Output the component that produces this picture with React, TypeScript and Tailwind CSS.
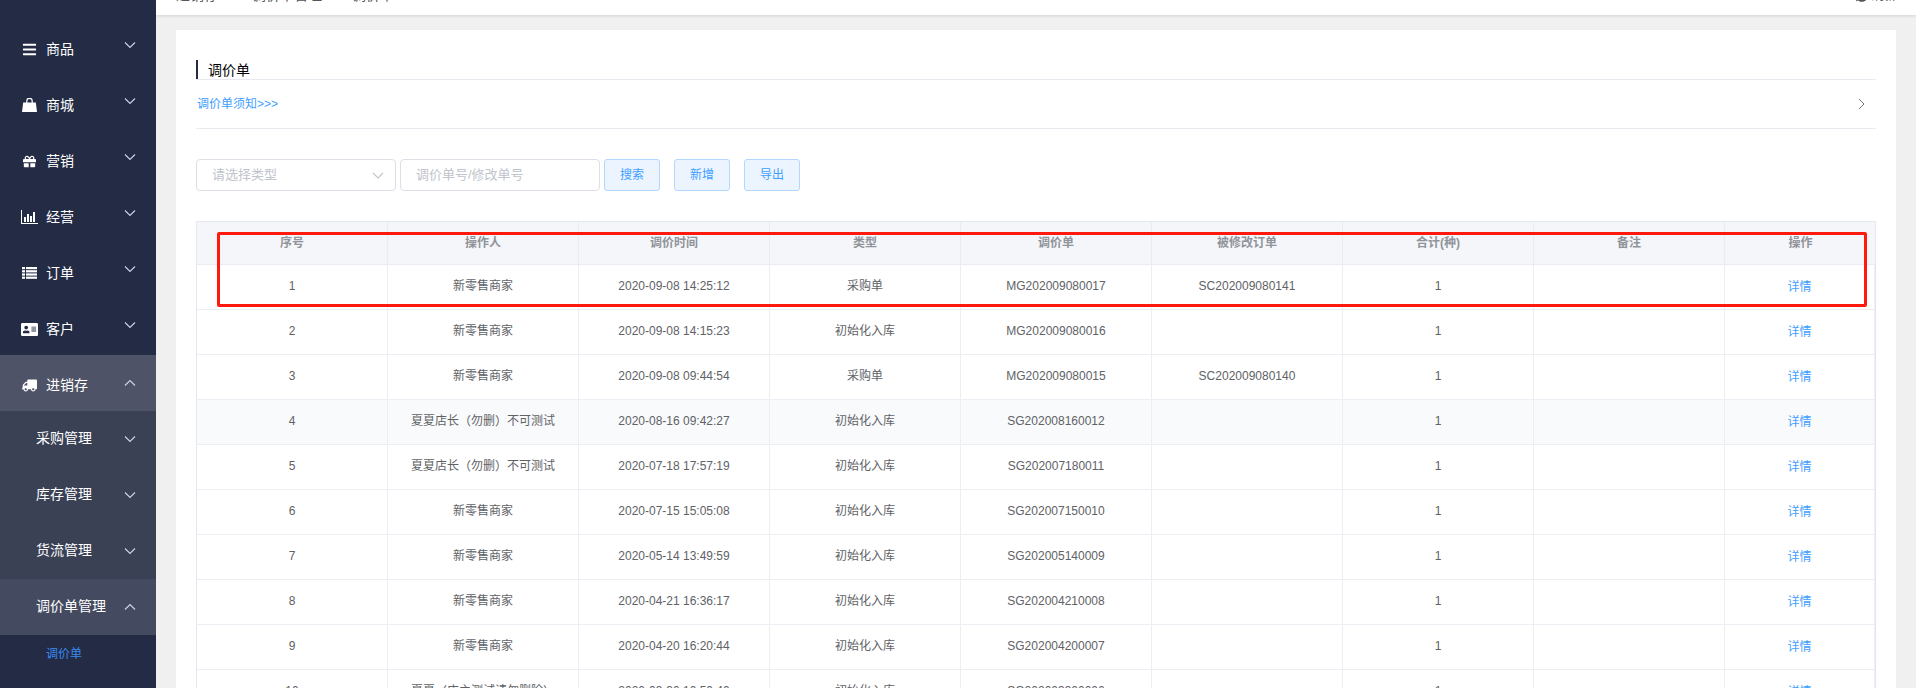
import React from "react";
import { FaBars, FaGift, FaAddressCard, FaTruck, FaSyncAlt } from "react-icons/fa";

const font = "font-['Liberation_Sans','Noto_Sans_CJK_SC',sans-serif]";

function Chevron({ up, className = "" }: { up?: boolean; className?: string }) {
  return (
    <svg width="12" height="8" viewBox="0 0 12 8" fill="none" className={className}>
      <polyline points={up ? "1,6.5 6,1.5 11,6.5" : "1,1.5 6,6.5 11,1.5"} stroke="#c9d3e0" strokeWidth="1.2" />
    </svg>
  );
}

function BagIcon() {
  return (
    <svg width="15" height="14" viewBox="0 0 15 14" fill="white">
      <path d="M1.2 4.5h12.6L15 14H0z" />
      <path d="M4.8 6V3a2.7 2.7 0 0 1 5.4 0v3" fill="none" stroke="white" strokeWidth="1.2" />
    </svg>
  );
}

function ChartIcon() {
  return (
    <svg width="17" height="14" viewBox="0 0 17 14" fill="white">
      <rect x="0" y="0" width="1" height="14" />
      <rect x="0" y="13" width="17" height="1" />
      <rect x="3" y="7" width="2" height="5" />
      <rect x="6" y="4" width="2" height="8" />
      <rect x="9" y="6" width="2" height="6" />
      <rect x="12" y="2" width="2" height="10" />
    </svg>
  );
}

function ListIcon() {
  return (
    <svg width="15" height="12" viewBox="0 0 15 12" fill="white">
      {[0, 3.2, 6.4, 9.6].map((y) => (
        <g key={y}>
          <rect x="0" y={y} width="3" height="2.2" />
          <rect x="4" y={y} width="11" height="2.2" />
        </g>
      ))}
    </svg>
  );
}

function IconBox({ children }: { children: React.ReactNode }) {
  return (
    <div className="w-[46px] pl-[21px] flex justify-start pt-1 shrink-0">
      <div className="w-[17px] flex justify-center text-white">{children}</div>
    </div>
  );
}

function MenuRow({ icon, label }: { icon: React.ReactNode; label: string }) {
  return (
    <div className="h-14 flex items-center">
      <IconBox>{icon}</IconBox>
      <span className="text-sm text-white pt-1 flex-1">{label}</span>
      <Chevron className="mr-[20px] mb-1" />
    </div>
  );
}

function SubRow({ label, active }: { label: string; active?: boolean }) {
  return (
    <div className={`h-14 flex items-center pl-9 pr-5 ${active ? "bg-[#444b60]" : ""}`}>
      <span className="text-sm text-white flex-1 pb-0.5">{label}</span>
      <Chevron up={active} />
    </div>
  );
}

const Paren = ({ c }: { c: string }) => <span className="font-['Noto_Sans_CJK_TC']">{c}</span>;

const headers = ["序号", "操作人", "调价时间", "类型", "调价单", "被修改订单", "合计(种)", "备注", "操作"];
const A = "新零售商家";
const B = (
  <>
    夏夏店长<Paren c="（" />勿删<Paren c="）" />不可测试
  </>
);
const C = (
  <>
    夏夏<Paren c="（" />店主测试请勿删除<Paren c="）" />
  </>
);
const rows: React.ReactNode[][] = [
  ["1", A, "2020-09-08 14:25:12", "采购单", "MG202009080017", "SC202009080141"],
  ["2", A, "2020-09-08 14:15:23", "初始化入库", "MG202009080016", ""],
  ["3", A, "2020-09-08 09:44:54", "采购单", "MG202009080015", "SC202009080140"],
  ["4", B, "2020-08-16 09:42:27", "初始化入库", "SG202008160012", ""],
  ["5", B, "2020-07-18 17:57:19", "初始化入库", "SG202007180011", ""],
  ["6", A, "2020-07-15 15:05:08", "初始化入库", "SG202007150010", ""],
  ["7", A, "2020-05-14 13:49:59", "初始化入库", "SG202005140009", ""],
  ["8", A, "2020-04-21 16:36:17", "初始化入库", "SG202004210008", ""],
  ["9", A, "2020-04-20 16:20:44", "初始化入库", "SG202004200007", ""],
  ["10", C, "2020-03-30 10:50:40", "初始化入库", "SG202003300006", ""],
];
const gridCols = "grid grid-cols-[repeat(8,191px)_151px]";

export default function App() {
  return (
    <div className={`h-[688px] w-[1916px] overflow-hidden flex ${font}`}>
      <aside className="w-[156px] shrink-0 bg-[#232b45] pt-[19px] z-20">
        <MenuRow icon={<FaBars size={15} />} label="商品" />
        <MenuRow icon={<BagIcon />} label="商城" />
        <MenuRow icon={<FaGift size={13} />} label="营销" />
        <MenuRow icon={<ChartIcon />} label="经营" />
        <MenuRow icon={<ListIcon />} label="订单" />
        <MenuRow icon={<FaAddressCard size={17} />} label="客户" />
        <div className="h-14 flex items-center bg-[#4e5367]">
          <IconBox>
            <FaTruck size={15} className="-scale-x-100" />
          </IconBox>
          <span className="text-sm text-white pt-1 flex-1">进销存</span>
          <Chevron up className="mr-5" />
        </div>
        <div className="bg-[#3a4155]">
          <SubRow label="采购管理" />
          <SubRow label="库存管理" />
          <SubRow label="货流管理" />
          <SubRow label="调价单管理" active />
        </div>
        <div className="pl-[46px] pt-2 text-xs leading-[22px] text-[#3a8af0]">调价单</div>
      </aside>

      <main className="flex-1 bg-[#f0f0f0] min-w-0">
        <header className="h-[15px] bg-white shadow-[0_1px_3px_rgba(0,0,0,0.12)] overflow-hidden flex items-start px-5 text-sm leading-none text-[#555] relative z-10">
          <div className="flex items-start w-full -mt-3">
            <span>进销存</span>
            <span className="ml-[34px]">调价单管理</span>
            <span className="ml-[30px]">调价单</span>
            <span className="ml-auto flex items-center gap-1 text-xs"><FaSyncAlt size={12} />刷新</span>
          </div>
        </header>

        <section className="relative ml-5 mt-[15px] w-[1720px] h-[700px] bg-white px-5 pt-[30px]">
          <div className="h-[20px] border-b border-[#e8eaf0] flex">
            <div className="w-0.5 h-[19px] bg-[#232b45]" />
            <span className="ml-2.5 text-[14px] leading-[21px] text-black">调价单</span>
          </div>
          <div className="h-[49px] border-b border-[#e8eaf0] flex items-center justify-between pl-px pr-[11px]">
            <span className="text-xs text-[#409eff]">调价单须知&gt;&gt;&gt;</span>
            <svg width="7" height="12" viewBox="0 0 7 12" fill="none">
              <polyline points="1,1 6,6 1,11" stroke="#778" strokeWidth="1" />
            </svg>
          </div>

          <div className="mt-[30px] flex items-center h-8 text-[13px]">
            <div className="w-[200px] h-8 border border-[#dcdfe6] rounded flex items-center justify-between pl-[15px] pr-[11px] text-[#c0c4cc]">
              <span>请选择类型</span>
              <svg width="12" height="7" viewBox="0 0 12 7" fill="none">
                <polyline points="1,1 6,6 11,1" stroke="#c0c4cc" strokeWidth="1.1" />
              </svg>
            </div>
            <div className="ml-1 w-[200px] h-8 border border-[#dcdfe6] rounded flex items-center pl-[15px] text-[#c0c4cc]">调价单号/修改单号</div>
            {["搜索", "新增", "导出"].map((t, i) => (
              <button key={t} className={`w-14 h-8 rounded-[3px] border border-[#b3d8ff] bg-[#ecf5ff] text-xs text-[#409eff] ${i === 0 ? "ml-1" : "ml-3.5"}`}>{t}</button>
            ))}
          </div>

          <div className="mt-[30px] w-[1680px] border-t border-l border-r border-[#e4e7ed] text-xs">
            <div className={`${gridCols} h-[43px] bg-[#f5f6fa] border-b border-[#e9ecf3] font-bold text-[#909399]`}>
              {headers.map((h, i) => (
                <div key={h} className={`flex justify-center pt-[13px] ${i < 8 ? "border-r border-[#e9ecf3]" : ""}`}>{h}</div>
              ))}
            </div>
            {rows.map((r, idx) => (
              <div key={idx} className={`${gridCols} h-[45px] border-b border-[#eceef4] text-[#606266] ${idx === 3 ? "bg-[#f9fafc]" : ""}`}>
                {r.map((c, i) => (
                  <div key={i} className="flex items-center justify-center border-r border-[#eceef4] pb-[2px] whitespace-nowrap">{c}</div>
                ))}
                <div className="flex items-center justify-center border-r border-[#eceef4] pb-[2px]">1</div>
                <div className="border-r border-[#eceef4]" />
                <div className="flex items-center justify-center border-r border-[#eceef4] w-[150px] text-[#409eff]">详情</div>
              </div>
            ))}
          </div>

          <div className="absolute left-[41px] top-[202px] w-[1650px] h-[75px] border-[3px] border-[#ff1a0d] rounded-[2px] pointer-events-none" />
        </section>
      </main>
    </div>
  );
}
